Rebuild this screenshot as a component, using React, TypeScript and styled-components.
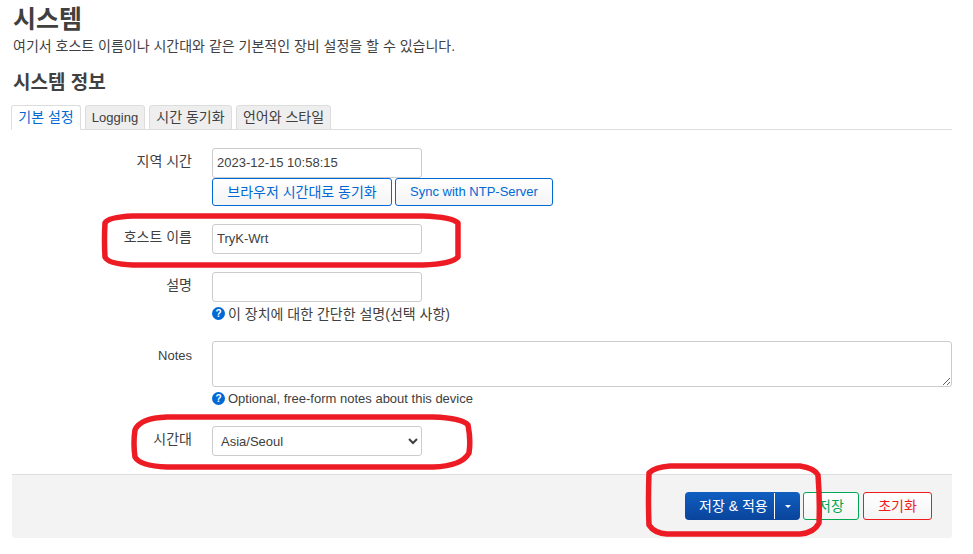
import React from 'react';
import styled, { createGlobalStyle } from 'styled-components';

const GlobalStyle = createGlobalStyle`
  html, body {
    margin: 0;
    padding: 0;
    background: #fff;
  }
  body {
    font-family: 'Liberation Sans', 'Noto Sans CJK KR', sans-serif;
    font-size: 13px;
    color: #404040;
  }
`;

const Page = styled.div`
  position: relative;
  width: 973px;
  height: 554px;
  overflow: hidden;
  padding: 0 21px 0 12px;
  box-sizing: border-box;
`;

const Title = styled.h2`
  margin: 0 0 0 1px;
  padding-top: 4px;
  font-size: 25px;
  line-height: 30px;
  font-weight: 700;
  color: #404040;
`;

const Description = styled.div`
  margin: 3px 0 0 1px;
  font-size: 14px;
  line-height: 18px;
`;

const SectionTitle = styled.h3`
  margin: 16px 0 0 1px;
  font-size: 19px;
  line-height: 24px;
  font-weight: 700;
  color: #404040;
`;

const Tabs = styled.ul`
  display: flex;
  gap: 4px;
  list-style: none;
  margin: 10px 0 0;
  padding: 0;
  height: 25px;
  border-bottom: 1px solid #ddd;
  box-sizing: border-box;
`;

const Tab = styled.li<{ $active?: boolean; $latin?: boolean; $width: number }>`
  width: ${({ $width }) => $width}px;
  height: 25px;
  box-sizing: border-box;
  border: 1px solid #ddd;
  border-bottom: 1px solid ${({ $active }) => ($active ? '#fff' : '#ddd')};
  border-radius: 3px 3px 0 0;
  background: ${({ $active }) => ($active ? '#fff' : '#eee')};
  color: ${({ $active }) => ($active ? '#0069d6' : '#404040')};
  line-height: 23px;
  font-size: ${({ $latin }) => ($latin ? '13px' : '14px')};
  text-align: center;
  white-space: nowrap;

  &:first-child {
    margin-left: -1px;
  }
`;

const Form = styled.div`
  padding-top: 18px;
`;

const Row = styled.div<{ $gap?: number }>`
  display: flex;
  margin-bottom: ${({ $gap }) => $gap ?? 0}px;
`;

const Label = styled.label<{ $latin?: boolean }>`
  width: 180px;
  flex: none;
  text-align: right;
  padding-top: ${({ $latin }) => ($latin ? '6px' : '4px')};
  font-size: ${({ $latin }) => ($latin ? '13px' : '14px')};
  line-height: 18px;
`;

const Field = styled.div`
  margin-left: 20px;
  flex: 1;
  min-width: 0;
`;

const TextInput = styled.input`
  display: block;
  width: 210px;
  height: 30px;
  box-sizing: border-box;
  border: 1px solid #ccc;
  border-radius: 3px;
  padding: 0 4px 2px;
  font: 13px 'Liberation Sans', 'Noto Sans CJK KR', sans-serif;
  color: #404040;
  background: #fff;
`;

const Notes = styled.textarea`
  display: block;
  width: 740px;
  height: 46px;
  box-sizing: border-box;
  border: 1px solid #ccc;
  border-radius: 3px;
  background: #fff;
  margin: 0;
`;

const Select = styled.select`
  display: block;
  width: 210px;
  height: 30px;
  box-sizing: border-box;
  border: 1px solid #ccc;
  border-radius: 3px;
  padding: 0 4px;
  font: 13px 'Liberation Sans', 'Noto Sans CJK KR', sans-serif;
  color: #404040;
  background: #fff;
`;

const ButtonRow = styled.div`
  display: flex;
  gap: 3px;
`;

const OutlineButton = styled.div<{ $color: string; $width: number; $latin?: boolean }>`
  width: ${({ $width }) => $width}px;
  height: 28px;
  box-sizing: border-box;
  border: 1px solid ${({ $color }) => $color};
  border-radius: 3px;
  background: linear-gradient(#fff, #f4f4f4);
  color: ${({ $color }) => $color};
  font-size: ${({ $latin }) => ($latin ? '13px' : '14px')};
  line-height: 26px;
  text-align: center;
  white-space: nowrap;
`;

const ResetButton = styled(OutlineButton)`
  margin-left: 1px;
`;

const Help = styled.div<{ $latin?: boolean }>`
  display: flex;
  align-items: center;
  gap: 3px;
  height: 18px;
  margin-top: 2px;
  font-size: ${({ $latin }) => ($latin ? '13px' : '14px')};
  white-space: nowrap;
`;

const HelpDot = styled.span`
  width: 13px;
  height: 13px;
  flex: none;
  border-radius: 50%;
  background: #0069d6;
  color: #fff;
  font-size: 10px;
  font-weight: 700;
  line-height: 13px;
  text-align: center;
`;

const ActionBar = styled.div`
  display: flex;
  justify-content: flex-end;
  align-items: flex-start;
  gap: 3px;
  width: 940px;
  height: 64px;
  margin-top: 18px;
  padding: 17px 20px 0 0;
  box-sizing: border-box;
  background: #f3f3f3;
  border-top: 1px solid #ddd;
  border-radius: 0 0 3px 3px;
`;

const ApplyButton = styled.div`
  display: flex;
  width: 115px;
  height: 28px;
  border-radius: 4px;
  background: linear-gradient(#0f5fc0, #0a449c);
  color: #fff;
  font-size: 14px;
  line-height: 28px;
`;

const ApplyLabel = styled.span`
  width: 75px;
  height: 26px;
  margin-top: 1px;
  padding-left: 14px;
  line-height: 26px;
  border-right: 1px solid #fff;
  white-space: nowrap;
`;

const ApplyCaret = styled.span`
  flex: 1;
  display: flex;
  align-items: center;
  justify-content: center;

  &::after {
    content: '';
    border-left: 3px solid transparent;
    border-right: 3px solid transparent;
    border-top: 3px solid #fff;
  }
`;

const Marker = styled.svg`
  position: absolute;
  left: 0;
  top: 0;
  pointer-events: none;
`;

const InkPath = styled.path`
  fill: none;
  stroke: #ed1c24;
  stroke-width: 5.5;
  stroke-linejoin: round;
`;

export default function App() {
  return (
    <Page>
      <GlobalStyle />
      <Title>시스템</Title>
      <Description>여기서 호스트 이름이나 시간대와 같은 기본적인 장비 설정을 할 수 있습니다.</Description>
      <SectionTitle>시스템 정보</SectionTitle>
      <Tabs>
        <Tab $active $width={70}>기본 설정</Tab>
        <Tab $latin $width={60}>Logging</Tab>
        <Tab $width={83}>시간 동기화</Tab>
        <Tab $width={95}>언어와 스타일</Tab>
      </Tabs>
      <Form>
        <Row $gap={18}>
          <Label>지역 시간</Label>
          <Field>
            <TextInput readOnly value="2023-12-15 10:58:15" />
            <ButtonRow>
              <OutlineButton $color="#0069d6" $width={180}>브라우저 시간대로 동기화</OutlineButton>
              <OutlineButton $color="#0069d6" $width={158} $latin>Sync with NTP-Server</OutlineButton>
            </ButtonRow>
          </Field>
        </Row>
        <Row $gap={18}>
          <Label>호스트 이름</Label>
          <Field>
            <TextInput readOnly value="TryK-Wrt" />
          </Field>
        </Row>
        <Row $gap={19}>
          <Label>설명</Label>
          <Field>
            <TextInput readOnly value="" />
            <Help>
              <HelpDot>?</HelpDot>이 장치에 대한 간단한 설명(선택 사항)
            </Help>
          </Field>
        </Row>
        <Row $gap={19}>
          <Label $latin>Notes</Label>
          <Field>
            <Notes readOnly />
            <Help $latin>
              <HelpDot>?</HelpDot>Optional, free-form notes about this device
            </Help>
          </Field>
        </Row>
        <Row>
          <Label>시간대</Label>
          <Field>
            <Select defaultValue="Asia/Seoul">
              <option>Asia/Seoul</option>
            </Select>
          </Field>
        </Row>
      </Form>
      <ActionBar>
        <ApplyButton>
          <ApplyLabel>저장 &amp; 적용</ApplyLabel>
          <ApplyCaret />
        </ApplyButton>
        <OutlineButton $color="#00a651" $width={56}>저장</OutlineButton>
        <ResetButton $color="#f01c1c" $width={69}>초기화</ResetButton>
      </ActionBar>
      <Marker width="973" height="554" viewBox="0 0 973 554">
        <InkPath d="M105 223 Q108 217 133 216 L423 216 Q452 217 458 223 L458 257 Q452 264 423 265 L133 265 Q108 264 105 257 Q104 240 105 223 Z" />
        <InkPath d="M135 430 Q140 418 167 417 L433 417 Q462 418 468 425 Q471 440 469 453 Q462 466 433 467 L167 467 Q140 466 135 457 Q133 443 135 430 Z" />
        <InkPath d="M649 473 Q655 467 670 466 L800 466 Q814 468 818 475 Q820 500 819 523 Q814 533 800 534 L667 534 Q654 533 649 525 Q648 500 649 473 Z" />
      </Marker>
    </Page>
  );
}
